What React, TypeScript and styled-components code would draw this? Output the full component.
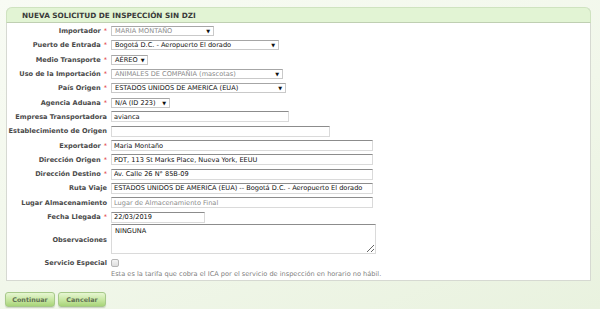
import React from "react";
import styled, { createGlobalStyle } from "styled-components";

const GlobalStyle = createGlobalStyle`
  html, body {
    margin: 0;
    padding: 0;
  }
  body {
    width: 600px;
    height: 309px;
    overflow: hidden;
    font-family: "DejaVu Sans", Verdana, sans-serif;
    background: linear-gradient(160deg, #f8fbf4 0%, #f1f7ea 55%, #e9f2df 100%);
  }
`;

const Page = styled.div`
  padding: 7px 9px 0 6px;
`;

const Panel = styled.section`
  background: #fff;
  border: 1px solid #d6d9d2;
  border-top: none;
  border-radius: 6px 6px 0 0;
`;

const PanelHeader = styled.h2`
  box-sizing: border-box;
  height: 16px;
  display: flex;
  align-items: center;
  padding-left: 15px;
  background: #e2f4d4;
  border: 1px solid #cfe3c0;
  border-bottom-color: #bfcfb2;
  border-radius: 6px 6px 0 0;
  margin: 0 -1px;
  font-size: 7.3px;
  font-weight: bold;
  color: #3a3a3a;
`;

const FormGrid = styled.div`
  display: grid;
  grid-template-columns: 100px 1fr;
  column-gap: 4px;
  padding: 1px 0 2px 0;
`;

const rowHeight = (h?: "tall" | "short") =>
  h === "tall" ? "32px" : h === "short" ? "13px" : "14.3px";

const Label = styled.div<{ $h?: "tall" | "short" }>`
  height: ${(p) => rowHeight(p.$h)};
  display: flex;
  align-items: center;
  justify-content: flex-end;
  font-size: 6.6px;
  font-weight: bold;
  color: #4a4a4a;
  white-space: nowrap;
`;

const Req = styled.span`
  color: #e04040;
  font-weight: normal;
  margin-left: 3px;
`;

const Cell = styled.div<{ $h?: "tall" | "short" }>`
  height: ${(p) => rowHeight(p.$h)};
  display: flex;
  align-items: ${(p) => (p.$h === "tall" ? "flex-start" : "center")};
`;

const SelectBox = styled.div<{ $w: number; $disabled?: boolean }>`
  box-sizing: border-box;
  width: ${(p) => p.$w}px;
  height: 10px;
  display: flex;
  align-items: center;
  justify-content: space-between;
  padding: 0 3px 0 3px;
  border: 1px solid #c9c9c9;
  border-top-color: #a6a6a6;
  background: #fff;
  font-size: 6.6px;
  color: ${(p) => (p.$disabled ? "#8a8a8a" : "#111")};
  white-space: nowrap;
`;

const Arrow = styled.span`
  font-size: 5px;
  color: #111;
  margin-left: 3px;
`;

const TextInput = styled.input<{ $w: number }>`
  box-sizing: border-box;
  width: ${(p) => p.$w}px;
  height: 11px;
  padding: 0 2px;
  margin: 0;
  border: 1px solid #dadada;
  border-top-color: #8c8c8c;
  font-family: "DejaVu Sans", Verdana, sans-serif;
  font-size: 6.6px;
  color: #111;
  outline: none;
  &::placeholder {
    color: #8a8a8a;
  }
`;

const TextArea = styled.textarea`
  box-sizing: border-box;
  width: 265px;
  height: 30px;
  margin: 0;
  padding: 2px 3px;
  border: 1px solid #dadada;
  border-top-color: #8c8c8c;
  font-family: "DejaVu Sans", Verdana, sans-serif;
  font-size: 6.6px;
  color: #111;
  outline: none;
`;

const Check = styled.span`
  box-sizing: border-box;
  width: 8px;
  height: 8px;
  border: 1px solid #b5b5b5;
  border-radius: 2px;
  background: linear-gradient(#f4f4f4, #dedede);
`;

const Hint = styled.div`
  grid-column: 2;
  font-size: 6.6px;
  color: #7f7f7f;
  height: 9px;
  display: flex;
  align-items: center;
`;

const Actions = styled.div`
  display: flex;
  gap: 3px;
  padding-top: 11px;
  margin-left: -1px;
`;

const Button = styled.button<{ $w: number }>`
  box-sizing: border-box;
  width: ${(p) => p.$w}px;
  height: 15px;
  padding: 0;
  border: 1px solid #a7c98a;
  border-radius: 3px;
  background: linear-gradient(#e6f6d2 0%, #c9e8a4 50%, #a8d479 100%);
  box-shadow: 0 1px 1px rgba(0, 0, 0, 0.15);
  font-family: "DejaVu Sans", Verdana, sans-serif;
  font-size: 6.4px;
  font-weight: bold;
  color: #5f6f52;
`;

type Field =
  | { kind: "select"; value: string; w: number; disabled?: boolean }
  | { kind: "input"; value: string; w: number; placeholder?: string };

type Row = { label: string; required?: boolean; field: Field };

const rows: Row[] = [
  { label: "Importador", required: true, field: { kind: "select", value: "MARIA MONTAÑO", w: 103, disabled: true } },
  { label: "Puerto de Entrada", required: true, field: { kind: "select", value: "Bogotá D.C. - Aeropuerto El dorado", w: 168 } },
  { label: "Medio Transporte", required: true, field: { kind: "select", value: "AÉREO", w: 37 } },
  { label: "Uso de la Importación", required: true, field: { kind: "select", value: "ANIMALES DE COMPAÑIA (mascotas)", w: 172, disabled: true } },
  { label: "País Origen", required: true, field: { kind: "select", value: "ESTADOS UNIDOS DE AMERICA (EUA)", w: 175 } },
  { label: "Agencia Aduana", required: true, field: { kind: "select", value: "N/A (ID 223)", w: 59 } },
  { label: "Empresa Transportadora", field: { kind: "input", value: "avianca", w: 178 } },
  { label: "Establecimiento de Origen", field: { kind: "input", value: "", w: 219 } },
  { label: "Exportador", required: true, field: { kind: "input", value: "Maria Montaño", w: 262 } },
  { label: "Dirección Origen", required: true, field: { kind: "input", value: "PDT, 113 St Marks Place, Nueva York, EEUU", w: 262 } },
  { label: "Dirección Destino", required: true, field: { kind: "input", value: "Av. Calle 26 N° 85B-09", w: 262 } },
  { label: "Ruta Viaje", field: { kind: "input", value: "ESTADOS UNIDOS DE AMERICA (EUA) -- Bogotá D.C. - Aeropuerto El dorado", w: 262 } },
  { label: "Lugar Almacenamiento", field: { kind: "input", value: "", w: 262, placeholder: "Lugar de Almacenamiento Final" } },
  { label: "Fecha Llegada", required: true, field: { kind: "input", value: "22/03/2019", w: 94 } },
];

function renderField(f: Field) {
  if (f.kind === "select") {
    return (
      <SelectBox $w={f.w} $disabled={f.disabled}>
        <span>{f.value}</span>
        <Arrow>▼</Arrow>
      </SelectBox>
    );
  }
  return <TextInput $w={f.w} readOnly value={f.value} placeholder={f.placeholder} />;
}

export default function App() {
  return (
    <>
      <GlobalStyle />
      <Page>
        <Panel>
          <PanelHeader>NUEVA SOLICITUD DE INSPECCIÓN SIN DZI</PanelHeader>
          <FormGrid>
            {rows.map((r) => (
              <React.Fragment key={r.label}>
                <Label>
                  {r.label}
                  {r.required && <Req>*</Req>}
                </Label>
                <Cell>{renderField(r.field)}</Cell>
              </React.Fragment>
            ))}
            <Label $h="tall">Observaciones</Label>
            <Cell $h="tall">
              <TextArea readOnly defaultValue="NINGUNA" />
            </Cell>
            <Label $h="short">Servicio Especial</Label>
            <Cell $h="short">
              <Check />
            </Cell>
            <Hint>Esta es la tarifa que cobra el ICA por el servicio de inspección en horario no hábil.</Hint>
          </FormGrid>
        </Panel>
        <Actions>
          <Button $w={50}>Continuar</Button>
          <Button $w={48}>Cancelar</Button>
        </Actions>
      </Page>
    </>
  );
}
